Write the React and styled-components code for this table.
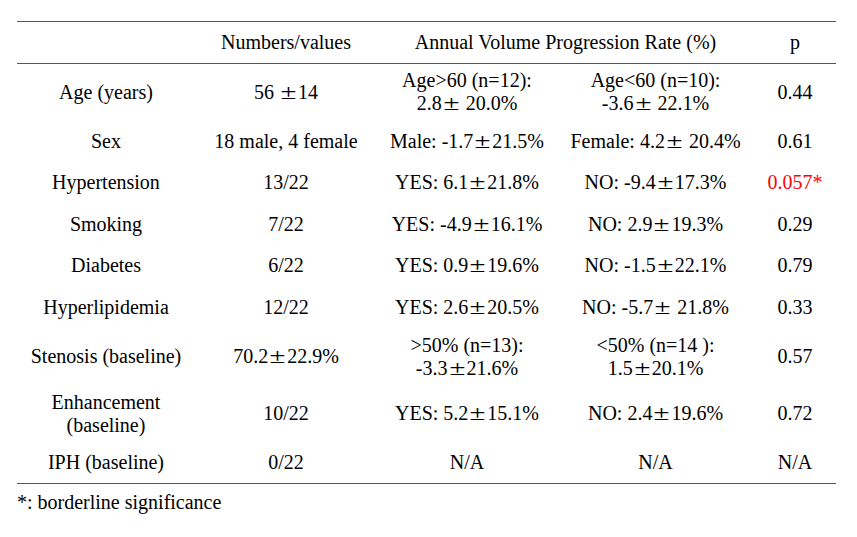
import React from 'react'
import styled, { createGlobalStyle } from 'styled-components'

const GlobalStyle = createGlobalStyle`
  html, body {
    margin: 0;
    padding: 0;
    background: #fff;
  }
`

const Page = styled.div`
  width: 857px;
  height: 537px;
  padding: 21px 0 0 17px;
  box-sizing: border-box;
  font-family: 'Liberation Serif', 'Times New Roman', serif;
  font-size: 20px;
  color: #000;
`

const Table = styled.table`
  width: 819px;
  table-layout: fixed;
  border-collapse: collapse;
  border-top: 1.5px solid #555;
  border-bottom: 1.5px solid #555;
`

const HeadRow = styled.tr`
  height: 42px;
  border-bottom: 1.5px solid #555;
`

const Row = styled.tr`
  height: ${props => (props.$tall ? '57px' : '41.5px')};
`

const Cell = styled.td`
  padding: 0;
  text-align: center;
  vertical-align: middle;
  line-height: 23px;
  white-space: nowrap;
  color: ${props => (props.$alert ? '#ff0000' : '#000')};
`

const HeadCell = styled(Cell).attrs({ as: 'th' })`
  font-weight: normal;
`

// the plus-minus sign in the source is a wide, full-width looking glyph
const Pm = styled.span`
  display: inline-block;
  width: 19px;
  text-align: center;
  transform: scaleX(1.45);
`

const Footnote = styled.div`
  margin-top: 8px;
  line-height: 21px;
`

const pm = '±'

// split "a±b" into text with a wide ± sign
const V = ({ children }) => {
  const parts = children.split(pm)
  return (
    <>
      {parts.map((p, i) => (
        <React.Fragment key={i}>
          {i > 0 && <Pm>{pm}</Pm>}
          {p}
        </React.Fragment>
      ))}
    </>
  )
}

const rows = [
  { label: 'Age (years)', value: '56 ±14', a: ['Age>60 (n=12):', '2.8± 20.0%'], b: ['Age<60 (n=10):', '-3.6± 22.1%'], p: '0.44', tall: true },
  { label: 'Sex', value: '18 male, 4 female', a: ['Male: -1.7±21.5%'], b: ['Female: 4.2± 20.4%'], p: '0.61' },
  { label: 'Hypertension', value: '13/22', a: ['YES: 6.1±21.8%'], b: ['NO: -9.4±17.3%'], p: '0.057*', alert: true },
  { label: 'Smoking', value: '7/22', a: ['YES: -4.9±16.1%'], b: ['NO: 2.9±19.3%'], p: '0.29' },
  { label: 'Diabetes', value: '6/22', a: ['YES: 0.9±19.6%'], b: ['NO: -1.5±22.1%'], p: '0.79' },
  { label: 'Hyperlipidemia', value: '12/22', a: ['YES: 2.6±20.5%'], b: ['NO: -5.7± 21.8%'], p: '0.33' },
  { label: 'Stenosis (baseline)', value: '70.2±22.9%', a: ['>50% (n=13):', '-3.3±21.6%'], b: ['<50% (n=14 ):', '1.5±20.1%'], p: '0.57', tall: true },
  { label: ['Enhancement', '(baseline)'], value: '10/22', a: ['YES: 5.2±15.1%'], b: ['NO: 2.4±19.6%'], p: '0.72', tall: true },
  { label: 'IPH (baseline)', value: '0/22', a: ['N/A'], b: ['N/A'], p: 'N/A' },
]

const Lines = ({ lines }) =>
  lines.map((l, i) => (
    <React.Fragment key={i}>
      {i > 0 && <br />}
      <V>{l}</V>
    </React.Fragment>
  ))

export default function App() {
  return (
    <Page>
      <GlobalStyle />
      <Table>
        <colgroup>
          <col style={{ width: 178 }} />
          <col style={{ width: 182 }} />
          <col style={{ width: 180 }} />
          <col style={{ width: 197 }} />
          <col style={{ width: 82 }} />
        </colgroup>
        <thead>
          <HeadRow>
            <HeadCell />
            <HeadCell>Numbers/values</HeadCell>
            <HeadCell colSpan={2}>Annual Volume Progression Rate (%)</HeadCell>
            <HeadCell>p</HeadCell>
          </HeadRow>
        </thead>
        <tbody>
          {rows.map((r, i) => (
            <Row key={i} $tall={r.tall}>
              <Cell>
                <Lines lines={Array.isArray(r.label) ? r.label : [r.label]} />
              </Cell>
              <Cell>
                <V>{r.value}</V>
              </Cell>
              <Cell>
                <Lines lines={r.a} />
              </Cell>
              <Cell>
                <Lines lines={r.b} />
              </Cell>
              <Cell $alert={r.alert}>{r.p}</Cell>
            </Row>
          ))}
        </tbody>
      </Table>
      <Footnote>*: borderline significance</Footnote>
    </Page>
  )
}
